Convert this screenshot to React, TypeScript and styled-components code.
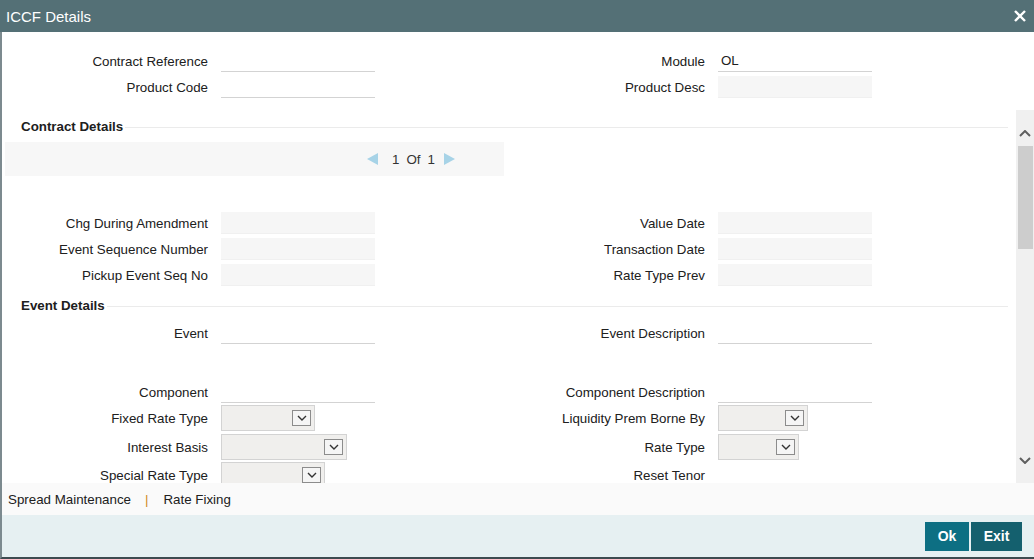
import React from "react";
import styled, { createGlobalStyle } from "styled-components";

const GlobalStyle = createGlobalStyle`
  html, body {
    margin: 0;
    padding: 0;
    background: #fff;
  }
  body {
    font-family: "Liberation Sans", Arial, sans-serif;
    font-size: 13.33px;
    color: #202020;
  }
`;

type FieldKind = "underline" | "readonly" | "select" | "none";

interface FieldDef {
  label: string;
  kind: FieldKind;
  value?: string;
  width?: number;
}

const Window = styled.div`
  width: 1034px;
  height: 559px;
  display: flex;
  flex-direction: column;
  overflow: hidden;
  background: #fff;
`;

const Header = styled.div`
  height: 32px;
  flex-shrink: 0;
  display: flex;
  align-items: center;
  justify-content: space-between;
  padding: 0 8px 0 6px;
  background: #547076;
  color: #fff;
`;

const Title = styled.div`
  font-size: 15px;
`;

const CloseButton = styled.button`
  border: 0;
  padding: 0;
  background: none;
  display: flex;
  cursor: pointer;
`;

const Body = styled.div`
  flex: 1;
  display: flex;
  flex-direction: column;
  border-left: 2px solid #7c8a8f;
  border-bottom: 2px solid #3d4b50;
  min-height: 0;
`;

const TopFields = styled.div`
  height: 78px;
  flex-shrink: 0;
  padding-top: 18px;
  box-sizing: border-box;
  display: flex;
  flex-direction: column;
  gap: 4px;
`;

const Label = styled.label`
  width: 208px;
  flex-shrink: 0;
  text-align: right;
  white-space: nowrap;
`;

const Row = styled.div<{ $mt?: number }>`
  display: grid;
  grid-template-columns: 495px 1fr;
  align-items: center;
  margin-top: ${(p) => p.$mt ?? 0}px;

  & > div:first-child ${Label} {
    width: 206px;
  }
`;

const Field = styled.div`
  display: flex;
  align-items: center;
  gap: 13px;
`;

const TextInput = styled.div<{ $readonly?: boolean }>`
  width: 154px;
  height: 22px;
  box-sizing: border-box;
  padding: 0 3px;
  display: flex;
  align-items: center;
  background: ${(p) => (p.$readonly ? "#f6f6f6" : "#fff")};
  border-bottom: 1px solid ${(p) => (p.$readonly ? "#f0f0f0" : "#d3d3d3")};
`;

const SelectBox = styled.div<{ $w: number }>`
  width: ${(p) => p.$w}px;
  height: 26px;
  box-sizing: border-box;
  border: 1px solid #d3d3d3;
  background: #f0efed;
  display: flex;
  align-items: center;
  justify-content: flex-end;
  padding-right: 3px;
`;

const SelectButton = styled.span`
  width: 19px;
  height: 16px;
  box-sizing: border-box;
  border: 1px solid #8c8c8c;
  background: #f5f5f5;
  display: flex;
  align-items: center;
  justify-content: center;
`;

const ScrollSection = styled.div`
  height: 373px;
  flex-shrink: 0;
  display: flex;
`;

const ScrollContent = styled.div`
  flex: 1;
  overflow: hidden;
`;

const SectionHeading = styled.div<{ $mt: number }>`
  height: 18px;
  margin-top: ${(p) => p.$mt}px;
  padding: 0 8px 0 19px;
  display: flex;
  align-items: center;
  gap: 2px;
  font-weight: bold;
`;

const HeadingLine = styled.span`
  flex: 1;
  height: 1px;
  margin-top: 2px;
  background: #ebebeb;
`;

const Pager = styled.div`
  width: 499px;
  height: 34px;
  margin: 7px 0 0 3px;
  background: #f7f7f7;
  display: flex;
  align-items: center;
  padding-left: 362px;
  box-sizing: border-box;
  gap: 6px;
  color: #333;
`;

const PagerText = styled.span`
  display: flex;
  gap: 7px;
  margin: 0 3px 0 8px;
`;

const FieldGroup = styled.div<{ $mt: number }>`
  margin-top: ${(p) => p.$mt}px;
  display: flex;
  flex-direction: column;
  gap: 4px;
`;

const Scrollbar = styled.div`
  width: 18px;
  flex-shrink: 0;
  background: #f0f0f0;
  display: flex;
  flex-direction: column;
  align-items: center;
`;

const ScrollArrow = styled.div<{ $down?: boolean }>`
  height: ${(p) => (p.$down ? 26 : 36)}px;
  display: flex;
  justify-content: center;
  align-items: flex-start;
  padding-top: ${(p) => (p.$down ? 0 : 20)}px;
  box-sizing: border-box;
`;

const ScrollThumb = styled.div`
  width: 15px;
  height: 103px;
  margin-left: 1px;
  background: #cdcdcd;
`;

const ScrollSpacer = styled.div`
  flex: 1;
`;

const LinksBar = styled.div`
  height: 32px;
  flex-shrink: 0;
  background: #fafafa;
  display: flex;
  align-items: center;
  padding-left: 6px;
`;

const LinkItem = styled.a`
  color: #202020;
  text-decoration: none;
  cursor: pointer;
`;

const Separator = styled.span`
  color: #d08a1c;
  margin: 0 15px 0 14px;
`;

const ButtonBar = styled.div`
  flex: 1;
  background: #e6f0f2;
  display: flex;
  justify-content: flex-end;
  align-items: center;
  padding-right: 12px;
  gap: 2px;
`;

const ActionButton = styled.button<{ $dark?: boolean; $w: number }>`
  width: ${(p) => p.$w}px;
  height: 29px;
  border: 0;
  padding: 0;
  background: ${(p) => (p.$dark ? "#14606e" : "#0d6f83")};
  color: #fff;
  font-family: "Liberation Sans", Arial, sans-serif;
  font-size: 14px;
  font-weight: bold;
  cursor: pointer;
`;

const Chevron = ({ up, color = "#555", w = 12, h = 7, sw = 2 }: { up?: boolean; color?: string; w?: number; h?: number; sw?: number }) => (
  <svg width={w} height={h} viewBox={`0 0 ${w} ${h}`}>
    <polyline
      points={up ? `1,${h - 1} ${w / 2},1 ${w - 1},${h - 1}` : `1,1 ${w / 2},${h - 1} ${w - 1},1`}
      fill="none"
      stroke={color}
      strokeWidth={sw}
    />
  </svg>
);

const Triangle = ({ left }: { left?: boolean }) => (
  <svg width="11" height="12" viewBox="0 0 11 12">
    <polygon points={left ? "11,0 11,12 0,6" : "0,0 0,12 11,6"} fill="#a7d3e7" />
  </svg>
);

const FieldCell = ({ def }: { def?: FieldDef }) => {
  if (!def) return <div />;
  return (
    <Field>
      <Label>{def.label}</Label>
      {def.kind === "underline" && <TextInput>{def.value}</TextInput>}
      {def.kind === "readonly" && <TextInput $readonly>{def.value}</TextInput>}
      {def.kind === "select" && (
        <SelectBox $w={def.width ?? 94}>
          <SelectButton>
            <Chevron w={10} h={6} sw={1.4} color="#333" />
          </SelectButton>
        </SelectBox>
      )}
    </Field>
  );
};

const FieldRow = ({ left, right, mt }: { left?: FieldDef; right?: FieldDef; mt?: number }) => (
  <Row $mt={mt}>
    <FieldCell def={left} />
    <FieldCell def={right} />
  </Row>
);

const App = () => {
  return (
    <>
      <GlobalStyle />
      <Window>
        <Header>
          <Title>ICCF Details</Title>
          <CloseButton aria-label="Close">
            <svg width="12" height="12" viewBox="0 0 12 12">
              <path d="M1 1 L11 11 M11 1 L1 11" stroke="#fff" strokeWidth="2.4" />
            </svg>
          </CloseButton>
        </Header>
        <Body>
          <TopFields>
            <FieldRow
              left={{ label: "Contract Reference", kind: "underline" }}
              right={{ label: "Module", kind: "underline", value: "OL" }}
            />
            <FieldRow
              left={{ label: "Product Code", kind: "underline" }}
              right={{ label: "Product Desc", kind: "readonly" }}
            />
          </TopFields>

          <ScrollSection>
            <ScrollContent>
              <SectionHeading $mt={7}>
                Contract Details
                <HeadingLine />
              </SectionHeading>
              <Pager>
                <Triangle left />
                <PagerText>
                  <span>1</span>
                  <span>Of</span>
                  <span>1</span>
                </PagerText>
                <Triangle />
              </Pager>

              <FieldGroup $mt={36}>
                <FieldRow
                  left={{ label: "Chg During Amendment", kind: "readonly" }}
                  right={{ label: "Value Date", kind: "readonly" }}
                />
                <FieldRow
                  left={{ label: "Event Sequence Number", kind: "readonly" }}
                  right={{ label: "Transaction Date", kind: "readonly" }}
                />
                <FieldRow
                  left={{ label: "Pickup Event Seq No", kind: "readonly" }}
                  right={{ label: "Rate Type Prev", kind: "readonly" }}
                />
              </FieldGroup>

              <SectionHeading $mt={10}>
                Event Details
                <HeadingLine />
              </SectionHeading>
              <FieldRow
                mt={8}
                left={{ label: "Event", kind: "underline" }}
                right={{ label: "Event Description", kind: "underline" }}
              />
              <FieldRow
                mt={37}
                left={{ label: "Component", kind: "underline" }}
                right={{ label: "Component Description", kind: "underline" }}
              />
              <FieldRow
                mt={2}
                left={{ label: "Fixed Rate Type", kind: "select", width: 94 }}
                right={{ label: "Liquidity Prem Borne By", kind: "select", width: 90 }}
              />
              <FieldRow
                mt={3}
                left={{ label: "Interest Basis", kind: "select", width: 126 }}
                right={{ label: "Rate Type", kind: "select", width: 81 }}
              />
              <FieldRow
                mt={2}
                left={{ label: "Special Rate Type", kind: "select", width: 104 }}
                right={{ label: "Reset Tenor", kind: "none" }}
              />
            </ScrollContent>
            <Scrollbar>
              <ScrollArrow>
                <Chevron up color="#5f5f5f" />
              </ScrollArrow>
              <ScrollThumb />
              <ScrollSpacer />
              <ScrollArrow $down>
                <Chevron color="#5f5f5f" />
              </ScrollArrow>
            </Scrollbar>
          </ScrollSection>

          <LinksBar>
            <LinkItem>Spread Maintenance</LinkItem>
            <Separator>|</Separator>
            <LinkItem>Rate Fixing</LinkItem>
          </LinksBar>

          <ButtonBar>
            <ActionButton $w={44}>Ok</ActionButton>
            <ActionButton $w={51} $dark>
              Exit
            </ActionButton>
          </ButtonBar>
        </Body>
      </Window>
    </>
  );
};

export default App;
